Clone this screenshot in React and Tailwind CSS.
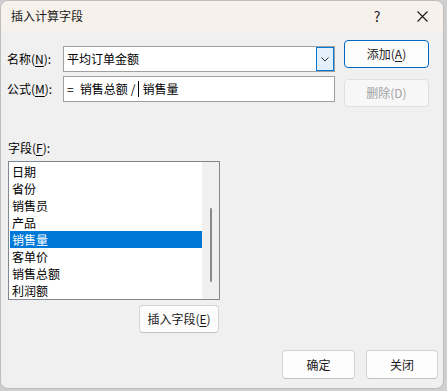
import React from "react";

const font = { fontFamily: '"Noto Sans CJK SC", "Noto Sans", sans-serif' };

function U({ children }) {
  return <span className="underline underline-offset-2">{children}</span>;
}

function Btn({ children, className = "", variant = "normal" }) {
  const base =
    "flex items-center justify-center rounded-[4px] text-[12px] leading-none";
  const v =
    variant === "default"
      ? "border border-[#0067c0] bg-[#fdfdfd] text-[#1a1a1a]"
      : variant === "disabled"
      ? "border border-[#e0e0e0] bg-[#f7f7f7] text-[#a2a2a2]"
      : "border border-[#d4d4d4] border-b-[#c2c2c2] bg-[#fdfdfd] text-[#1a1a1a]";
  return <div className={`${base} ${v} ${className}`}>{children}</div>;
}

const items = ["日期", "省份", "销售员", "产品", "销售量", "客单价", "销售总额", "利润额"];

export default function App() {
  return (
    <div className="w-[447px] h-[391px] bg-[#cfcfcf] overflow-hidden" style={font}>
      <div className="w-[444px] h-[389px] rounded-[8px] overflow-hidden border border-[#bdbdbd] flex flex-col bg-[#f0f0f0]">
        {/* title bar */}
        <div className="h-[30px] shrink-0 bg-[#f7f1ec] flex items-center text-[#1a1a1a]">
          <div className="pl-[10px] text-[12px] flex-1">插入计算字段</div>
          <div className="w-[30px] text-center text-[14px] mr-[15px]">?</div>
          <div className="w-[30px] flex items-center justify-center mr-[6px]">
            <svg width="11" height="11" viewBox="0 0 11 11">
              <path d="M0.5 0.5 L10.5 10.5 M10.5 0.5 L0.5 10.5" stroke="#1a1a1a" strokeWidth="1.1" />
            </svg>
          </div>
        </div>

        {/* body */}
        <div className="flex-1 flex flex-col pl-[6px] text-[12px] text-black">
          {/* top area */}
          <div className="flex mt-[9px]">
            <div className="flex flex-col pt-[6px] gap-[4px]">
              <div className="flex items-center h-[26px]">
                <div className="w-[56px]">
                  名称(<U>N</U>):
                </div>
                <div className="w-[272px] h-[26px] border border-[#a0a0a0] bg-white flex items-center">
                  <div className="flex-1 pl-[3px]">平均订单金额</div>
                  <div className="w-[18px] h-[24px] border border-[#0078d4] bg-[#e3effa] flex items-center justify-center">
                    <svg width="8" height="5" viewBox="0 0 8 5">
                      <path d="M0.5 0.5 L4 4 L7.5 0.5" fill="none" stroke="#333" strokeWidth="1" />
                    </svg>
                  </div>
                </div>
              </div>
              <div className="flex items-center h-[26px]">
                <div className="w-[56px]">
                  公式(<U>M</U>):
                </div>
                <div className="w-[272px] h-[26px] border border-[#a0a0a0] bg-white flex items-center pl-[3px] whitespace-pre">
                  <span>=</span>
                  <span className="ml-[6px]">销售总额</span>
                  <span className="ml-[3px]">/</span>
                  <span className="inline-block w-px h-[16px] bg-black ml-[3px] mr-[3px]" />
                  <span>销售量</span>
                </div>
              </div>
            </div>
            <div className="flex flex-col ml-[9px] gap-[11px]">
              <Btn variant="default" className="w-[85px] h-[28px]">
                添加(<U>A</U>)
              </Btn>
              <Btn variant="disabled" className="w-[85px] h-[28px]">
                删除(D)
              </Btn>
            </div>
          </div>

          {/* field list */}
          <div className="mt-[33px] ml-[1px] leading-[16px]">
            字段(<U>F</U>):
          </div>
          <div className="mt-[5px] ml-[1px] w-[212px] h-[139px] border border-[#828790] bg-white flex">
            <div className="flex-1 flex flex-col pt-[1px] pl-[1px]">
              {items.map((t) => (
                <div
                  key={t}
                  className={`h-[17px] leading-[17px] pl-[2px] ${
                    t === "销售量" ? "bg-[#0078d7] text-white" : ""
                  }`}
                >
                  {t}
                </div>
              ))}
            </div>
            <div className="w-[17px] bg-[#f0f0f0] flex justify-center pt-[46px]">
              <div className="w-[2px] h-[74px] rounded-full bg-[#8a8a8a]" />
            </div>
          </div>
          <div className="flex ml-[132px] mt-[5px]">
            <Btn className="w-[80px] h-[28px]">
              插入字段(<U>E</U>)
            </Btn>
          </div>

          {/* bottom buttons */}
          <div className="flex justify-end gap-[11px] mt-[17px] mr-[5px]">
            <Btn className="w-[73px] h-[29px]">确定</Btn>
            <Btn className="w-[72px] h-[29px]">关闭</Btn>
          </div>
        </div>
      </div>
    </div>
  );
}
